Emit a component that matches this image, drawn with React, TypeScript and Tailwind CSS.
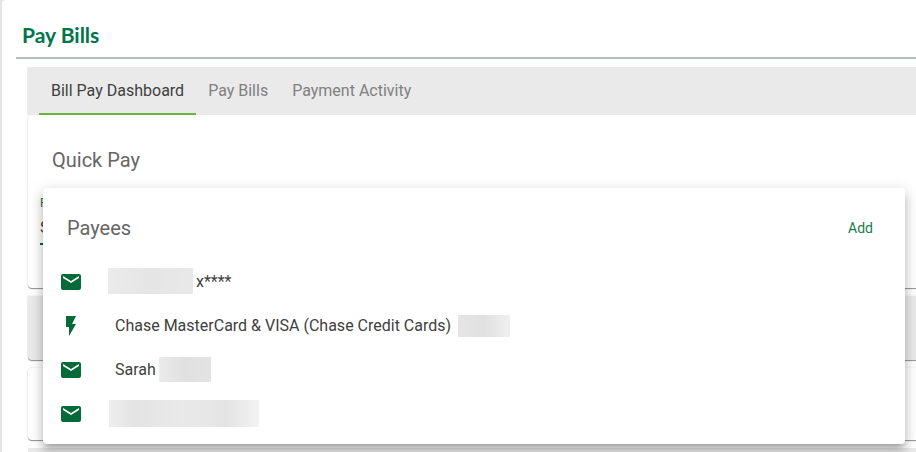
import clsx from 'clsx'

const tabs = ['Bill Pay Dashboard', 'Pay Bills', 'Payment Activity']

function MailIcon() {
  return (
    <svg viewBox="0 0 24 24" className="size-6 shrink-0 fill-[#046a38]" aria-hidden="true">
      <path d="M20 8l-8 5-8-5V6l8 5 8-5m0-2H4c-1.110 0-2 .890-2 2v12a2 2 0 0 0 2 2h16a2 2 0 0 0 2-2V6c0-1.110-.900-2-2-2z" />
    </svg>
  )
}

function FlashIcon() {
  return (
    <svg viewBox="0 0 24 24" className="size-6 shrink-0 fill-[#046a38]" aria-hidden="true">
      <path d="M7 2v11h3v9l7-12h-4l4-8z" />
    </svg>
  )
}

// Hidden part of a payee name or account
function Redacted({ className }: { className: string }) {
  return <span className={clsx('block shrink-0', className)} />
}

function PayeeMenu() {
  return (
    <div className="absolute top-[73px] right-[11px] left-[15px] z-10 rounded bg-white pb-2 shadow-[0_5px_5px_-3px_rgba(0,0,0,0.2),0_8px_10px_1px_rgba(0,0,0,0.14),0_3px_14px_2px_rgba(0,0,0,0.12)]">
      <div className="flex h-[72px] items-center justify-between px-6 pt-2">
        <h3 className="text-xl text-[#666666]">Payees</h3>
        <button type="button" className="px-2 text-sm text-[#1b7a4b]">Add</button>
      </div>
      <ul className="text-base text-[#404040]">
        <li>
          <button type="button" className="flex h-11 w-full items-center pl-4 text-left">
            <MailIcon />
            <Redacted className="mb-0.5 ml-[25px] h-[26px] w-[85px] bg-linear-to-r from-[#ebebeb] via-[#e5e5e5] to-[#e9e9e9]" />
            <span className="ml-[3px]">x****</span>
          </button>
        </li>
        <li>
          <button type="button" className="flex h-11 w-full items-center pl-4 text-left">
            <FlashIcon />
            <span className="ml-8">Chase MasterCard &amp; VISA (Chase Credit Cards)</span>
            <Redacted className="ml-[7px] h-[22px] w-[52px] bg-linear-to-r from-[#e5e5e5] via-[#e1e1e1] to-[#efefef]" />
          </button>
        </li>
        <li>
          <button type="button" className="flex h-11 w-full items-center pl-4 text-left">
            <MailIcon />
            <span className="ml-8">Sarah</span>
            <Redacted className="mb-0.5 ml-[3px] h-[25px] w-[52px] bg-linear-to-r from-[#ebebeb] via-[#e0e0e0] to-[#e3e3e3]" />
          </button>
        </li>
        <li>
          <button type="button" className="flex h-11 w-full items-center pl-4 text-left" aria-label="Payee">
            <MailIcon />
            <Redacted className="mb-0.5 ml-[26px] h-[27px] w-[150px] bg-linear-[to_right,#ededed,#e4e4e4_18%,#e9e9e9_50%,#e4e4e4_78%,#f3f3f3]" />
          </button>
        </li>
      </ul>
    </div>
  )
}

export default function App() {
  const card = 'shadow-[0_1px_1px_rgba(0,0,0,0.42),0_0_2px_rgba(0,0,0,0.14)]'

  return (
    <div className="h-screen overflow-hidden bg-[#e5e5e5] pl-[2px] font-[Roboto,sans-serif]">
      <main className="min-h-screen rounded-tl bg-white pt-5 pl-[14px]">
        <h1 className="h-[37px] pl-[6px] font-[Lato,sans-serif] text-[21px] leading-[30px] font-bold text-[#00754a]">
          Pay Bills
        </h1>

        <div className="border-t-2 border-[#b0c2bb] pt-2 pl-[11px]">
          <nav className="relative z-10 flex h-12 bg-[#eaeaea] pl-3">
            {tabs.map((tab, i) => (
              <a
                key={tab}
                href="#"
                className={clsx(
                  'flex items-center border-b-2 px-3 pt-0.5 text-base',
                  i === 0 ? 'border-[#6cb33f] text-[#404040]' : 'border-transparent text-[#808080]'
                )}
              >
                {tab}
              </a>
            ))}
          </nav>

          <div className="flex flex-col gap-2 pl-px">
            <section className={clsx('relative h-[173px] rounded-l bg-white px-3 pt-8', card)}>
              <h2 className="pl-3 text-xl leading-[26px] text-[#666666]">Quick Pay</h2>
              <div className="mt-[22px] flex flex-col">
                <label htmlFor="payee" className="text-xs text-[#1b7a4b]">Pay To</label>
                <select id="payee" className="h-[34px] appearance-none border-b-2 border-[#046a38] pt-0.5 text-base text-[#404040]">
                  <option>Select a payee</option>
                </select>
              </div>
              <PayeeMenu />
            </section>
            <section className={clsx('h-16 rounded-bl bg-[#eaeaea]', card)} />
            <section className={clsx('h-[72px] rounded-l bg-white', card)} />
            <section className="h-16 bg-[#eaeaea]" />
          </div>
        </div>
      </main>
    </div>
  )
}
